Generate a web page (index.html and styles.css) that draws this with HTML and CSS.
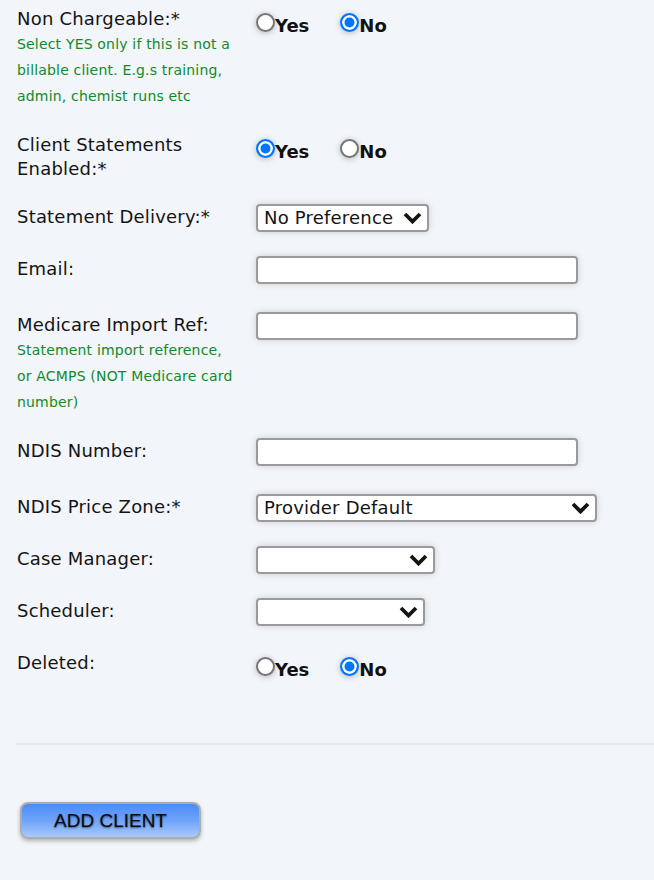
FILE: index.html
```html
<!DOCTYPE html>
<html lang="en">
<head>
<meta charset="utf-8">
<title>Add Client</title>
<link rel="stylesheet" href="styles.css">
</head>
<body>
<form class="form">
  <div class="row row-lg">
    <div class="label">Non Chargeable:*
      <div class="hint">Select YES only if this is not a billable client. E.g.s training, admin, chemist runs etc</div>
    </div>
    <div class="radios">
      <label class="opt"><input type="radio" name="nonchargeable" class="radio"><span class="opt-text">Yes</span></label>
      <label class="opt"><input type="radio" name="nonchargeable" class="radio" checked><span class="opt-text">No</span></label>
    </div>
  </div>

  <div class="row row-lg">
    <div class="label">Client Statements Enabled:*</div>
    <div class="radios">
      <label class="opt"><input type="radio" name="statements" class="radio" checked><span class="opt-text">Yes</span></label>
      <label class="opt"><input type="radio" name="statements" class="radio"><span class="opt-text">No</span></label>
    </div>
  </div>

  <div class="row">
    <div class="label">Statement Delivery:*</div>
    <div class="select-wrap w-delivery">
      <select class="select"><option>No Preference</option></select>
      <svg class="chev" viewBox="0 0 19 12" aria-hidden="true"><polyline points="2,2 9.5,9.5 17,2"/></svg>
    </div>
  </div>

  <div class="row">
    <div class="label">Email:</div>
    <input type="text" class="input">
  </div>

  <div class="row row-lg">
    <div class="label">Medicare Import Ref:
      <div class="hint">Statement import reference, or ACMPS (NOT Medicare card number)</div>
    </div>
    <input type="text" class="input">
  </div>

  <div class="row">
    <div class="label">NDIS Number:</div>
    <input type="text" class="input">
  </div>

  <div class="row">
    <div class="label">NDIS Price Zone:*</div>
    <div class="select-wrap w-zone">
      <select class="select"><option>Provider Default</option></select>
      <svg class="chev" viewBox="0 0 19 12" aria-hidden="true"><polyline points="2,2 9.5,9.5 17,2"/></svg>
    </div>
  </div>

  <div class="row">
    <div class="label">Case Manager:</div>
    <div class="select-wrap w-manager">
      <select class="select"><option></option></select>
      <svg class="chev" viewBox="0 0 19 12" aria-hidden="true"><polyline points="2,2 9.5,9.5 17,2"/></svg>
    </div>
  </div>

  <div class="row">
    <div class="label">Scheduler:</div>
    <div class="select-wrap w-scheduler">
      <select class="select"><option></option></select>
      <svg class="chev" viewBox="0 0 19 12" aria-hidden="true"><polyline points="2,2 9.5,9.5 17,2"/></svg>
    </div>
  </div>

  <div class="row">
    <div class="label">Deleted:</div>
    <div class="radios">
      <label class="opt"><input type="radio" name="deleted" class="radio"><span class="opt-text">Yes</span></label>
      <label class="opt"><input type="radio" name="deleted" class="radio" checked><span class="opt-text">No</span></label>
    </div>
  </div>

  <div class="divider"></div>

  <div class="actions">
    <button type="button" class="btn">ADD CLIENT</button>
  </div>
</form>
</body>
</html>
```

FILE: styles.css
```css
html, body {
  margin: 0;
  padding: 0;
  background: #f2f5f9;
}

body {
  font-family: "DejaVu Sans", Verdana, sans-serif;
  color: #141414;
  min-height: 880px;
}

.form {
  padding: 6px 0 0 17px;
  margin: 0;
}

.row {
  display: flex;
  align-items: flex-start;
  margin-bottom: 22px;
}

.row-lg {
  margin-bottom: 23px;
}

.label {
  width: 221px;
  margin-right: 18px;
  flex: none;
  padding-top: 1px;
  font-size: 18px;
  line-height: 24px;
  letter-spacing: 0.2px;
}

.hint {
  font-size: 14px;
  line-height: 26px;
  letter-spacing: 0.18px;
  color: #118a2b;
}

.radios {
  display: flex;
  align-items: flex-start;
}

.opt {
  display: flex;
  align-items: flex-start;
  margin-right: 31px;
  cursor: pointer;
}

.radio {
  appearance: none;
  -webkit-appearance: none;
  width: 19px;
  height: 19px;
  margin: 7px 0 0 0;
  border: 2px solid #767676;
  border-radius: 50%;
  background: #fff;
  box-shadow: 0 1px 6px rgba(0, 0, 0, 0.25);
  box-sizing: border-box;
  flex: none;
}

.radio:checked {
  border: 2px solid #0075ff;
  background: #0075ff;
  box-shadow: inset 0 0 0 2.5px #fff, 0 1px 6px rgba(0, 0, 0, 0.25);
}

.opt-text {
  font-size: 18px;
  font-weight: bold;
  line-height: 24px;
  padding-top: 8px;
  color: #111;
}

.input {
  width: 322px;
  height: 28px;
  margin: 0 0 6px 0;
  box-sizing: border-box;
  border: 2px solid #9a9a9a;
  border-radius: 4px;
  background: #fff;
  box-shadow: 0 0 7px rgba(0, 0, 0, 0.16);
  font-family: inherit;
  font-size: 16px;
  padding: 0 6px;
}

.select-wrap {
  position: relative;
  height: 28px;
  margin-bottom: 2px;
  flex: none;
}

.select {
  appearance: none;
  -webkit-appearance: none;
  display: block;
  width: 100%;
  height: 28px;
  margin: 0;
  box-sizing: border-box;
  border: 2px solid #9a9a9a;
  border-radius: 4px;
  background: #fff;
  box-shadow: 0 0 7px rgba(0, 0, 0, 0.16);
  font-family: "DejaVu Sans", Verdana, sans-serif;
  font-size: 18px;
  letter-spacing: 0.2px;
  color: #141414;
  padding: 0 28px 0 6px;
  line-height: 24px;
}

.chev {
  position: absolute;
  right: 7px;
  top: 8px;
  width: 19px;
  height: 12px;
  pointer-events: none;
}

.chev polyline {
  fill: none;
  stroke: #151510;
  stroke-width: 3.8;
  stroke-linecap: butt;
  stroke-linejoin: miter;
}

.w-delivery { width: 173px; }
.w-zone { width: 341px; }
.w-manager { width: 179px; }
.w-scheduler { width: 169px; }

.divider {
  height: 2px;
  background: #e6e9ec;
  margin: 61px 0 0 -1px;
}

.actions {
  padding: 57px 0 0 3px;
}

.btn {
  width: 181px;
  height: 37px;
  box-sizing: border-box;
  border: 2px solid #adadad;
  border-radius: 8px;
  background: linear-gradient(to bottom, #4b8cf8 0%, #6ea3f9 50%, #a9cafc 100%);
  box-shadow: 0 2px 4px rgba(0, 0, 0, 0.28);
  font-family: "Liberation Sans", Arial, sans-serif;
  font-size: 19px;
  color: #0a0a0a;
  text-shadow: 0 1px 2px rgba(0, 0, 0, 0.55);
  padding: 0;
  cursor: pointer;
}
```
